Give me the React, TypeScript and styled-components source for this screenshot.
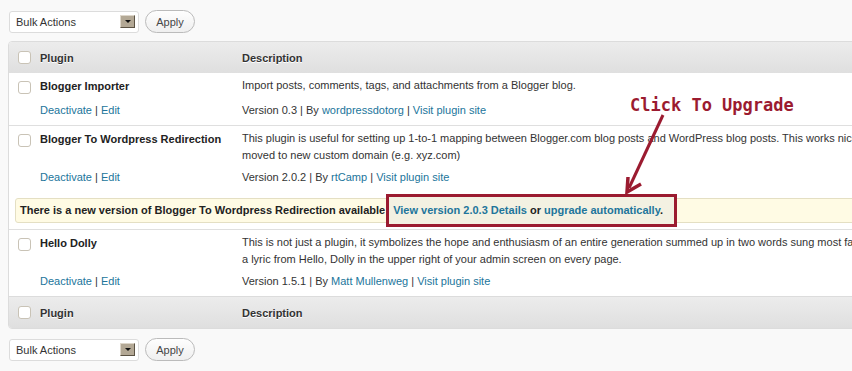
import styled, { createGlobalStyle } from "styled-components";

const GlobalStyle = createGlobalStyle`
  html, body { margin: 0; padding: 0; background: #f9f9f9; overflow: hidden; }
  body { font-family: "Liberation Sans", Arial, sans-serif; font-size: 11px; color: #333; }
  a { color: #21759b; text-decoration: none; }
`;

const accent = "#9b1b30";

const Page = styled.div`
    position: relative; width: 852px; height: 371px; overflow: hidden;
    padding: 10px 0 0 8px; box-sizing: border-box;
`
const NavBar = styled.div<{ bottom?: boolean }>`
    display: flex; align-items: center; gap: 6px; height: 23px; padding-left: 1px;
    margin: ${({ bottom }) => bottom ? "9px 0 0" : "0 0 8px"};
`
const Select = styled.div`
    width: 130px; height: 22px; box-sizing: border-box; display: flex; align-items: center;
    padding: 0 3px 0 6px; background: #fff; border: 1px solid #dcdcdc; border-radius: 3px;
    color: #333;
    span{ flex: 1; }
`
const SelectArrow = styled.i`
    width: 15px; height: 13px; box-sizing: border-box; display: flex; align-items: center; justify-content: center;
    background: #b3a895; border: 1px solid; border-color: #ddd6ca #5b5243 #5b5243 #ddd6ca;
    &::after{ content: ""; border: 3px solid transparent; border-top: 3px solid #111; border-bottom: 0; }
`
const ApplyBtn = styled.button`
    width: 50px; height: 23px; border: 1px solid #bbb; border-radius: 12px; padding: 0;
    background: linear-gradient(#fefefe, #efefef); color: #464646;
    font: 11px "Liberation Sans", Arial, sans-serif;
`
const Table = styled.div`
    width: 1100px; background: #fff; border: 1px solid #dcdcdc; border-radius: 4px; overflow: hidden;
`
const HeadRow = styled.div<{ foot?: boolean }>`
    display: grid; grid-template-columns: 31px 202px 1fr; align-items: center; height: 31px;
    background: linear-gradient(#ececec, #dfdfdf); font-weight: bold; color: #333;
    text-shadow: 0 1px 0 #fff;
    ${({ foot }) => foot && "border-top: 1px solid #dcdcdc;"}
`
const Check = styled.span`
    display: block; width: 13px; height: 13px; box-sizing: border-box; margin-left: 9px;
    background: #fff; border: 1px solid #c9c3b6; border-radius: 3px;
`
const PluginBlock = styled.div`
    display: grid; grid-template-columns: 31px 202px 1fr; line-height: 17px;
    & + &{ border-top: 1px solid #dfdfdf; }
`
const CheckCell = styled.div` padding-top: 8px; `
const TitleCell = styled.div` padding: 5px 0 4px; font-weight: bold; color: #222; `
const DescCell = styled.div` padding: 4px 0 2px; white-space: nowrap; color: #333; `
const SubCell = styled.div` padding: 3px 0 6px; white-space: nowrap; color: #333; `
const NoticeRow = styled.div` grid-column: 1 / -1; padding: 6px 0 6px 6px; `
const Notice = styled.div`
    background: #fffbe4; border: 1px solid #e4dfc3; border-radius: 3px;
    padding: 3px 6px 3px 4px; font-weight: bold; color: #222; white-space: nowrap;
`
const Highlight = styled.span`
    display: inline-block; box-sizing: border-box; width: 291px; margin: -8px 0 -8px 1px;
    padding: 5px 8px 5px 4px; border: 3px solid ${accent}; background: #f3f1e2;
`
const Label = styled.div`
    position: absolute; left: 630px; top: 95px; line-height: 20px;
    font: bold 17px "DejaVu Sans Mono", "Liberation Mono", monospace; color: ${accent};
`
const ArrowSvg = styled.svg` position: absolute; left: 620px; top: 110px; `

interface IPlugin {
    title: string
    desc: string[]
    version: string
    author: string
    notice?: boolean
}

const plugins: IPlugin[] = [
    { title: "Blogger Importer", desc: ["Import posts, comments, tags, and attachments from a Blogger blog."], version: "0.3", author: "wordpressdotorg" },
    {
        title: "Blogger To Wordpress Redirection",
        desc: [
            "This plugin is useful for setting up 1-to-1 mapping between Blogger.com blog posts and WordPress blog posts. This works nicely for blogs hosted on blogspot.com and",
            "moved to new custom domain (e.g. xyz.com)",
        ],
        version: "2.0.2", author: "rtCamp", notice: true,
    },
    {
        title: "Hello Dolly",
        desc: [
            "This is not just a plugin, it symbolizes the hope and enthusiasm of an entire generation summed up in two words sung most famously by Louis Armstrong: Hello, Dolly. When activated you will randomly see",
            "a lyric from Hello, Dolly in the upper right of your admin screen on every page.",
        ],
        version: "1.5.1", author: "Matt Mullenweg",
    },
]

function Nav({ bottom }: { bottom?: boolean }) {
    return (
        <NavBar bottom={bottom}>
            <Select><span>Bulk Actions</span><SelectArrow /></Select>
            <ApplyBtn>Apply</ApplyBtn>
        </NavBar>
    )
}

function Head({ foot }: { foot?: boolean }) {
    return (
        <HeadRow foot={foot}>
            <Check />
            <div>Plugin</div>
            <div>Description</div>
        </HeadRow>
    )
}

function App() {
    return (
        <Page>
            <GlobalStyle />
            <Nav />
            <Table>
                <Head />
                {plugins.map((p, k) => (
                    <PluginBlock key={k}>
                        <CheckCell><Check /></CheckCell>
                        <TitleCell>{p.title}</TitleCell>
                        <DescCell>
                            {p.desc.map((line, i) => <div key={i}>{line}</div>)}
                        </DescCell>
                        <div />
                        <SubCell><a>Deactivate</a> | <a>Edit</a></SubCell>
                        <SubCell>Version {p.version} | By <a>{p.author}</a> | <a>Visit plugin site</a></SubCell>
                        {p.notice &&
                            <NoticeRow>
                                <Notice>
                                    There is a new version of {p.title} available
                                    <Highlight><a>View version 2.0.3 Details</a> or <a>upgrade automatically</a>.</Highlight>
                                </Notice>
                            </NoticeRow>
                        }
                    </PluginBlock>
                ))}
                <Head foot />
            </Table>
            <Nav bottom />

            <Label>Click To Upgrade</Label>
            <ArrowSvg width="50" height="90" viewBox="0 0 50 90">
                <line x1="43" y1="5" x2="9" y2="78" stroke={accent} strokeWidth="3" />
                <polyline points="8,67 7,82 21,74" fill="none" stroke={accent} strokeWidth="3.5" strokeLinejoin="miter" />
            </ArrowSvg>
        </Page>
    )
}
export default App;
